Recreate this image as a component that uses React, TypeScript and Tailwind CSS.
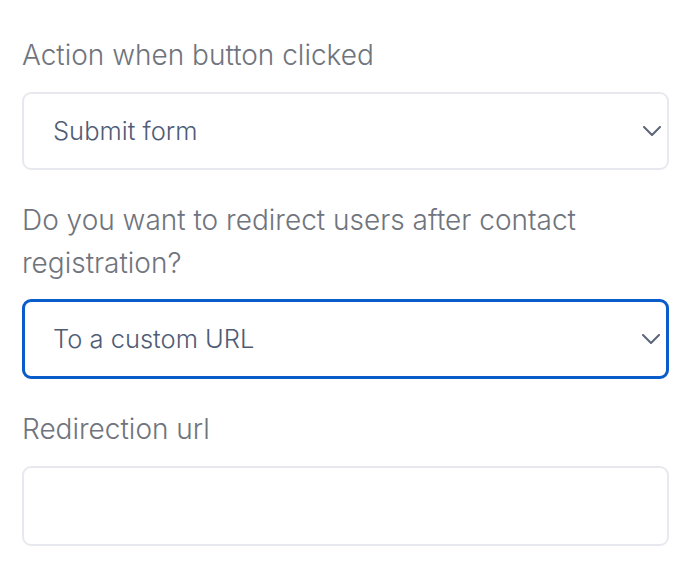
import React from 'react';

function Chevron() {
  return (
    <svg width="18" height="10" viewBox="0 0 18 10" fill="none" className="shrink-0">
      <path d="M1 1l8 8 8-8" stroke="#5b6479" strokeWidth="2" strokeLinecap="round" strokeLinejoin="round" />
    </svg>
  );
}

function SelectBox({ value, focused }: { value: string; focused?: boolean }) {
  return (
    <div
      className={
        focused
          ? 'flex h-[80px] items-center justify-between rounded-[9px] border-[3px] border-[#0a5ccb] bg-white pl-[28px] pr-[6px]'
          : 'flex h-[78px] items-center justify-between rounded-[9px] border-2 border-[#e8e9ee] bg-white pl-[29px] pr-[6px]'
      }
    >
      <span className="text-[25.5px] font-light leading-none text-[#4f5c76]">{value}</span>
      <Chevron />
    </div>
  );
}

export default function App() {
  return (
    <div className="min-h-screen bg-white px-[22px] pt-[34px] font-['Inter',sans-serif]" style={{ width: 700 }}>
      <div className="w-[647px]">
        <label className="block text-[28px] font-light leading-[43px] text-[#70747d]">Action when button clicked</label>
        <div className="mt-[15px]">
          <SelectBox value="Submit form" />
        </div>

        <label className="mt-[29px] block text-[28px] font-light leading-[43px] text-[#70747d]">
          Do you want to redirect users after contact registration?
        </label>
        <div className="mt-[14px]">
          <SelectBox value="To a custom URL" focused />
        </div>

        <label className="mt-[29px] block text-[28px] font-light leading-[43px] text-[#70747d]">Redirection url</label>
        <div className="mt-[15px] h-[80px] rounded-[9px] border-2 border-[#e8e9ee] bg-white" />
      </div>
    </div>
  );
}
